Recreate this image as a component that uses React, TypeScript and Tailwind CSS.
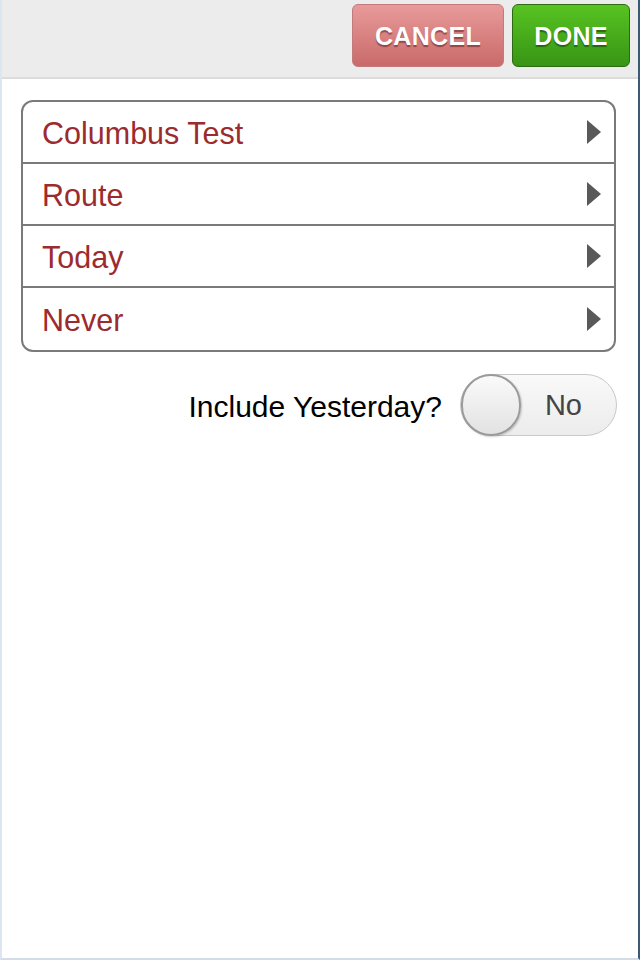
const rows = ['Columbus Test', 'Route', 'Today', 'Never'];

function Arrow() {
  return (
    <svg width="14" height="24" viewBox="0 0 14 24" className="shrink-0">
      <path d="M0 0 L14 12 L0 24 Z" fill="#595959" />
    </svg>
  );
}

export default function App() {
  return (
    <div
      className="w-[640px] h-[960px] flex flex-col bg-white border-l-2 border-b-2 border-r-2 border-l-[#dce6f0] border-b-[#d3dde8] border-r-[#3d5a75] overflow-hidden"
      style={{ fontFamily: '"Liberation Sans", Arial, sans-serif' }}
    >
      {/* Header */}
      <div className="h-[79px] shrink-0 bg-[#ececec] border-b-2 border-[#dcdcdc] flex items-start justify-end gap-[8px] pt-[4px] pr-[8px]">
        <button className="w-[152px] h-[63px] rounded-[6px] border border-[#c37a7a] bg-gradient-to-b from-[#e89a9a] to-[#c96a6a] text-white text-[25px] font-bold tracking-[0.3px] pt-[2px] [text-shadow:0_2px_1px_rgba(90,30,30,0.55)]">
          CANCEL
        </button>
        <button className="w-[118px] h-[63px] rounded-[6px] border border-[#2d6a12] bg-gradient-to-b from-[#58c322] to-[#379515] text-white text-[25px] font-bold tracking-[0.3px] pt-[2px] [text-shadow:0_2px_1px_rgba(20,60,10,0.6)]">
          DONE
        </button>
      </div>

      <div className="pl-[19px] pr-[22px] pt-[21px]">
        {/* List */}
        <div className="border-2 border-[#7a7a7a] rounded-[12px] overflow-hidden">
          {rows.map((r, i) => (
            <div
              key={r}
              className={`h-[62px] flex items-center justify-between pl-[19px] pr-[13px] ${
                i < rows.length - 1 ? 'border-b-2 border-[#7a7a7a]' : ''
              }`}
            >
              <span className="text-[30.5px] text-[#9b2b2f] pt-[3px]">{r}</span>
              <Arrow />
            </div>
          ))}
        </div>

        {/* Toggle row */}
        <div className="flex items-center justify-end gap-[18px] mt-[22px] mr-[-1px]">
          <span className="text-[30px] text-black pt-[2px]">Include Yesterday?</span>
          <div className="relative w-[157px] h-[62px] rounded-full border border-[#c8c8c8] bg-gradient-to-b from-[#f9f9f9] to-[#ececec] flex items-center justify-end pr-[34px]">
            <div className="absolute left-0 top-[-1px] w-[60px] h-[62px] rounded-full border-2 border-[#9a9a9a] bg-gradient-to-b from-[#fafafa] to-[#e2e2e2] shadow-[1px_1px_2px_rgba(0,0,0,0.2)]" />
            <span className="text-[29px] text-[#444] pt-[2px]">No</span>
          </div>
        </div>
      </div>
    </div>
  );
}
